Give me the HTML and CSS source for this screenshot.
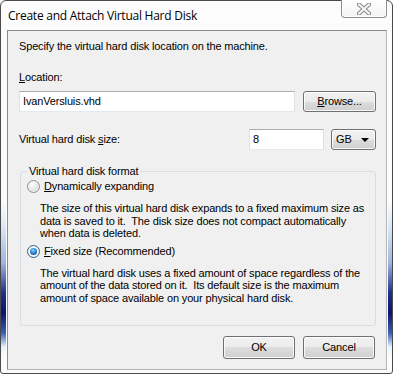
FILE: index.html
```html
<!DOCTYPE html>
<html>
<head>
<meta charset="utf-8">
<link rel="stylesheet" href="styles.css">
</head>
<body>
<div class="window">
  <div class="titlebar">
    <span class="title">Create and Attach Virtual Hard Disk</span>
    <div class="close">
      <svg width="16" height="12" viewBox="0 0 16 12">
        <path d="M3 1.5 L13 10.5 M13 1.5 L3 10.5" stroke="#8a8a8a" stroke-width="4.2" stroke-linecap="round" fill="none"/>
        <path d="M3 1.5 L13 10.5 M13 1.5 L3 10.5" stroke="#f4f4f4" stroke-width="2.2" stroke-linecap="round" fill="none"/>
      </svg>
    </div>
  </div>
  <div class="client">
    <p class="intro">Specify the virtual hard disk location on the machine.</p>
    <div class="label loc-label"><u>L</u>ocation:</div>
    <div class="row loc-row">
      <div class="textbox loc-box">IvanVersluis.vhd</div>
      <div class="btn browse"><span><u>B</u>rowse...</span></div>
    </div>
    <div class="row size-row">
      <div class="label size-label">Virtual hard disk <u>s</u>ize:</div>
      <div class="size-controls">
        <div class="textbox size-box">8</div>
        <div class="btn combo"><span>GB</span><span class="arrow"></span></div>
      </div>
    </div>
    <fieldset class="group">
      <legend>Virtual hard disk format</legend>
      <div class="radio-row first">
        <span class="radio"></span>
        <span class="label"><u>D</u>ynamically expanding</span>
      </div>
      <p class="desc first-desc">The size of this virtual hard disk expands to a fixed maximum size as<br>data is saved to it.&nbsp; The disk size does not compact automatically<br>when data is deleted.</p>
      <div class="radio-row second">
        <span class="radio checked"><span class="dot"></span></span>
        <span class="label"><u>F</u>ixed size (Recommended)</span>
      </div>
      <p class="desc second-desc">The virtual hard disk uses a fixed amount of space regardless of the<br>amount of the data stored on it.&nbsp; Its default size is the maximum<br>amount of space available on your physical hard disk.</p>
    </fieldset>
    <div class="buttons">
      <div class="btn dlg"><span>OK</span></div>
      <div class="btn dlg"><span>Cancel</span></div>
    </div>
  </div>
</div>
</body>
</html>
```

FILE: styles.css
```css
* { box-sizing: border-box; }
html, body { margin: 0; padding: 0; background: #ffffff; }
body {
  font-family: "Liberation Sans", Arial, sans-serif;
  font-size: 11px;
  letter-spacing: -0.15px;
  color: #000;
  width: 394px;
  height: 376px;
  overflow: hidden;
}
u { text-decoration: underline; text-underline-offset: 1px; }

.window {
  width: 393px;
  height: 374px;
  border: 1px solid #4a4a4a;
  border-radius: 6px 6px 3px 3px;
  background-color: #fcfcfc;
  background-image:
    linear-gradient(to bottom, rgba(255,255,255,0) 200px, #dbe9f7 225px, #9fb5de 262px, #1f2f8c 292px, #0c1470 312px, #3a5fb0 332px, #e4f6ff 346px, rgba(255,255,255,0) 356px),
    linear-gradient(to bottom, rgba(255,255,255,0) 200px, #dbe9f7 225px, #9fb5de 262px, #1f2f8c 292px, #0c1470 312px, #3a5fb0 332px, #e4f6ff 346px, rgba(255,255,255,0) 356px);
  background-size: 5px 100%, 4px 100%;
  background-position: 0 0, 100% 0;
  background-repeat: no-repeat;
  padding: 0 5px 3px 6px;
  display: flex;
  flex-direction: column;
}

.titlebar {
  height: 29px;
  display: flex;
  justify-content: space-between;
  align-items: flex-start;
  flex: none;
}
.title {
  font-family: "Open Sans", "Noto Sans", sans-serif;
  font-size: 12px;
  line-height: 16px;
  margin-top: 7px;
  margin-left: 1px;
  color: #000;
  letter-spacing: -0.25px;
}
.close {
  width: 46px;
  height: 18px;
  margin-top: -1px;
  border: 1px solid #8e8e8e;
  border-top: none;
  border-radius: 0 0 4px 4px;
  background: linear-gradient(#ffffff, #f3f3f3);
  box-shadow: inset 0 0 0 1px #ffffff;
  display: flex;
  align-items: center;
  justify-content: center;
}
.close svg { display: block; margin-top: 1px; }

.client {
  flex: 1;
  background: #f0f0f0;
  border: 1px solid #8c8c8c;
  border-right-color: #b4b4b4;
  border-bottom-color: #b4b4b4;
  padding: 9px 10px 0 11px;
  display: flex;
  flex-direction: column;
}
.intro { margin: 0; line-height: 13px; }
.label { line-height: 13px; }
.loc-label { margin-top: 18px; }

.row { display: flex; align-items: center; }
.loc-row { margin-top: 7px; gap: 8px; }

.textbox {
  height: 21px;
  background: #fff;
  border: 1px solid #dbdfe6;
  border-top-color: #abadb3;
  border-left-color: #e2e3ea;
  border-bottom-color: #e3e9ef;
  padding: 0 3px;
  line-height: 19px;
}
.loc-box { width: 276px; }

.btn {
  border: 1px solid #707070;
  border-radius: 3px;
  background: linear-gradient(#f2f2f2 0%, #ebebeb 50%, #dddddd 50%, #cfcfcf 100%);
  box-shadow: inset 0 0 0 1px rgba(255,255,255,0.85);
  display: flex;
  align-items: center;
  justify-content: center;
  line-height: 13px;
}
.browse { width: 73px; height: 21px; }

.size-row { margin-top: 17px; justify-content: space-between; }
.size-controls { display: flex; gap: 7px; }
.size-box { width: 75px; }
.combo {
  width: 45px;
  height: 21px;
  justify-content: space-between;
  padding: 0 6px 0 4px;
}
.arrow {
  width: 0; height: 0;
  border-left: 4px solid transparent;
  border-right: 4px solid transparent;
  border-top: 4px solid #000;
  margin-top: 1px;
}

.group {
  margin: 15px 0 0 1px;
  padding: 0 6px 21px 6px;
  border: 1px solid #d5dfe5;
  border-radius: 3px;
  min-width: 0;
}
.group legend {
  padding: 0 2px;
  margin-left: 0;
  line-height: 13px;
}
.radio-row { display: flex; align-items: center; gap: 4px; line-height: 13px; }
.radio-row.first { margin-top: 2px; }
.radio-row.second { margin-top: 5px; }
.radio {
  width: 13px; height: 13px;
  border-radius: 50%;
  border: 1px solid #8e8f8f;
  background: radial-gradient(circle at 40% 35%, #ffffff 0%, #eaeaea 45%, #c8c8c8 100%);
  box-shadow: inset 0 0 0 1px #f4f4f4;
  display: flex; align-items: center; justify-content: center;
  flex: none;
}
.radio.checked { border-color: #2c628b; background: radial-gradient(circle at 50% 40%, #ffffff, #e5eef6); }
.dot {
  width: 7px; height: 7px; border-radius: 50%;
  background: radial-gradient(circle at 45% 35%, #8fd6ff 0%, #2a8ad4 45%, #0d3d7d 100%);
}
.desc {
  margin: 0 0 0 13px;
  line-height: 12.5px;
  white-space: nowrap;
}
.first-desc { margin-top: 9px; }
.second-desc { margin-top: 9px; }

.buttons {
  margin-top: 10px;
  display: flex;
  justify-content: flex-end;
  gap: 8px;
  padding-right: 1px;
}
.dlg { width: 72px; height: 23px; }
```
